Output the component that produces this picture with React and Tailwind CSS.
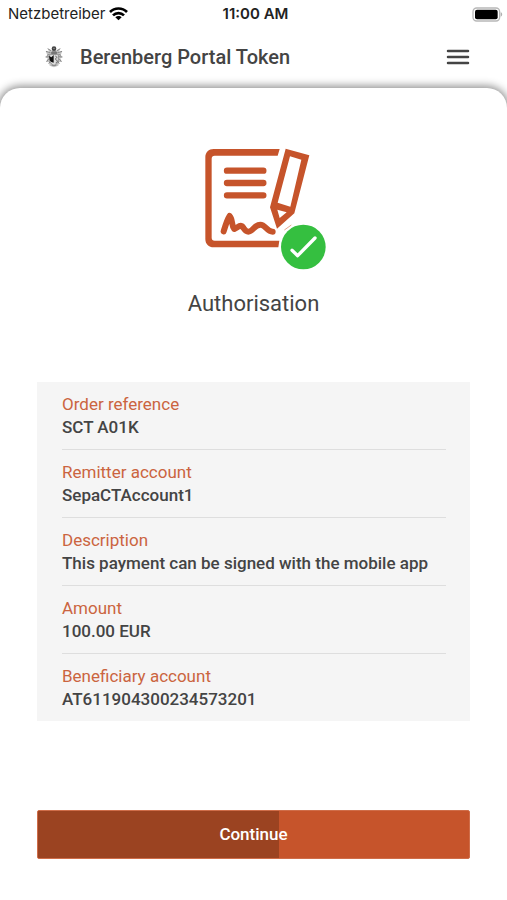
import { useState } from 'react';

const details = [
  { label: 'Order reference', value: 'SCT A01K' },
  { label: 'Remitter account', value: 'SepaCTAccount1' },
  { label: 'Description', value: 'This payment can be signed with the mobile app' },
  { label: 'Amount', value: '100.00 EUR' },
  { label: 'Beneficiary account', value: 'AT611904300234573201' },
];

function WifiIcon() {
  return (
    <svg width="19" height="14" viewBox="0 0 57 42" fill="none" stroke="#000" strokeWidth="8" aria-hidden="true">
      <path d="M3 15C17 1 40 1 54 15" />
      <path d="M12 25C21 16 36 16 45 25" />
      <path d="M28.5 40L19 31C24 26 33 26 38 31Z" fill="#000" stroke="none" />
    </svg>
  );
}

function BatteryIcon() {
  return (
    <svg width="31" height="15" viewBox="0 0 93 45" aria-hidden="true">
      <rect x="3" y="3" width="80" height="39" rx="11" fill="#fff" stroke="#b8b8b8" strokeWidth="4" />
      <rect x="9" y="8" width="68" height="29" rx="6" fill="#000" />
      <path d="M86 16C92 18 92 27 86 29Z" fill="#b0b0b0" />
    </svg>
  );
}

function Crest() {
  return (
    <svg width="18" height="22" viewBox="0 0 54 66" fill="none" aria-hidden="true">
      <path d="M20 13L9 8L12 18L2 16L7 27L1 33L8 37L3 47L12 49L14 59L27 64L40 59L42 49L51 47L46 37L53 33L47 27L52 16L42 18L45 8L34 13Z" fill="#c4c4c4" />
      <path d="M18 14L8 8M16 20L3 16M13 25L6 28M14 32L2 33M12 38L5 47M16 46L11 53M36 14L46 8M38 20L51 16M41 25L48 28M40 32L52 33M42 38L49 47M38 46L43 53M20 58H34" stroke="#888" strokeWidth="3" />
      <path d="M14 25H40V42C40 51 34 55 27 58C20 55 14 51 14 42Z" fill="#ddd" stroke="#777" strokeWidth="2" />
      <path d="M12 30L19 34L26 27V50C19 49 15 45 14 41Z" fill="#111" />
      <path d="M31 30L36 34L31 39L38 46L32 51" stroke="#666" strokeWidth="3" />
      <path d="M17 20L22 16H33L38 20L34 25H20Z" fill="#777" />
      <circle cx="27" cy="8" r="7" fill="#444" />
      <circle cx="27" cy="7" r="2" fill="#aaa" />
    </svg>
  );
}

function SignatureIcon() {
  return (
    <svg width="122" height="122" viewBox="44 41 366 366" fill="none" aria-hidden="true">
      <path d="M268 44H70C55 44 45 54 45 69V314C45 329 55 339 70 339H264L267 319H73C67 319 64 316 64 310V73C64 67 67 64 73 64H262Z" fill="#c6542b" />
      <path d="M110 109H219M110 146H219M110 183H219" stroke="#c6542b" strokeWidth="19" strokeLinecap="round" />
      <path d="M100 291C105 275 110 257 118 245C128 255 122 272 132 284C140 282 146 272 154 275C162 281 163 292 174 292C188 292 192 271 210 271C226 271 229 292 247 292" stroke="#c6542b" strokeWidth="18" strokeLinecap="round" strokeLinejoin="round" />
      <path fillRule="evenodd" d="M286 43L357 63L312 237L260 283L239 219ZM299 66L262 205L300 217L333 76ZM261 226L268 251L289 234Z" fill="#c6542b" />
      <path d="M282 287L303 272" stroke="#e6a78f" strokeWidth="3" />
      <circle cx="339" cy="338" r="67" fill="#35bf40" />
      <path d="M305 348L322 364L374 311" stroke="#fff" strokeWidth="10" strokeLinecap="round" strokeLinejoin="round" />
    </svg>
  );
}

function MenuIcon() {
  return (
    <svg width="24" height="18" viewBox="0 0 24 18" stroke="#444" strokeWidth="2.5" strokeLinecap="round" aria-hidden="true">
      <path d="M2 3H22M2 9H22M2 15H22" />
    </svg>
  );
}

export default function App() {
  const [progress] = useState(56);

  return (
    <div className="flex min-h-screen flex-col overflow-hidden bg-white font-['Roboto',sans-serif] text-[#444]">
      <div className="grid h-7 grid-cols-3 items-center pr-1 pl-2 font-['Inter',sans-serif] text-[15px] text-[#222]">
        <div className="flex items-center gap-1">
          <span>Netzbetreiber</span>
          <WifiIcon />
        </div>
        <span className="text-center font-semibold">11:00 AM</span>
        <div className="flex justify-end">
          <BatteryIcon />
        </div>
      </div>

      <header className="flex h-15 items-center pr-[37px] pb-0.5 pl-9">
        <div className="flex w-9 justify-center">
          <Crest />
        </div>
        <h1 className="ml-2 flex-1 text-xl leading-7 font-medium">Berenberg Portal Token</h1>
        <button type="button" aria-label="Menu">
          <MenuIcon />
        </button>
      </header>

      <main className="flex flex-1 flex-col rounded-t-[20px] bg-white px-[37px] pt-15 shadow-[0_0_8px_2px_rgba(0,0,0,0.45)]">
        <div className="flex flex-col items-center">
          <div className="pl-6">
            <SignatureIcon />
          </div>
          <h2 className="mt-5 text-[22px] leading-7">Authorisation</h2>
        </div>

        <dl className="mt-16 bg-[#f5f5f5] pr-6 pl-[25px]">
          {details.map((item) => (
            <div key={item.label} className="border-b border-[#dedede] pt-[11px] pb-2.5 text-[17px] leading-[23px] last:border-0">
              <dt className="text-[#cb6440]">{item.label}</dt>
              <dd className="font-medium">{item.value}</dd>
            </div>
          ))}
        </dl>

        <button
          type="button"
          className="relative mt-[89px] h-[49px] overflow-hidden rounded-xs border border-[#cf6d49] bg-[#c6542b] text-[17px] font-medium text-white"
        >
          <span className="absolute inset-y-0 left-0 bg-[#9b4321]" style={{ width: `${progress}%` }} />
          <span className="relative">Continue</span>
        </button>
      </main>
    </div>
  );
}
